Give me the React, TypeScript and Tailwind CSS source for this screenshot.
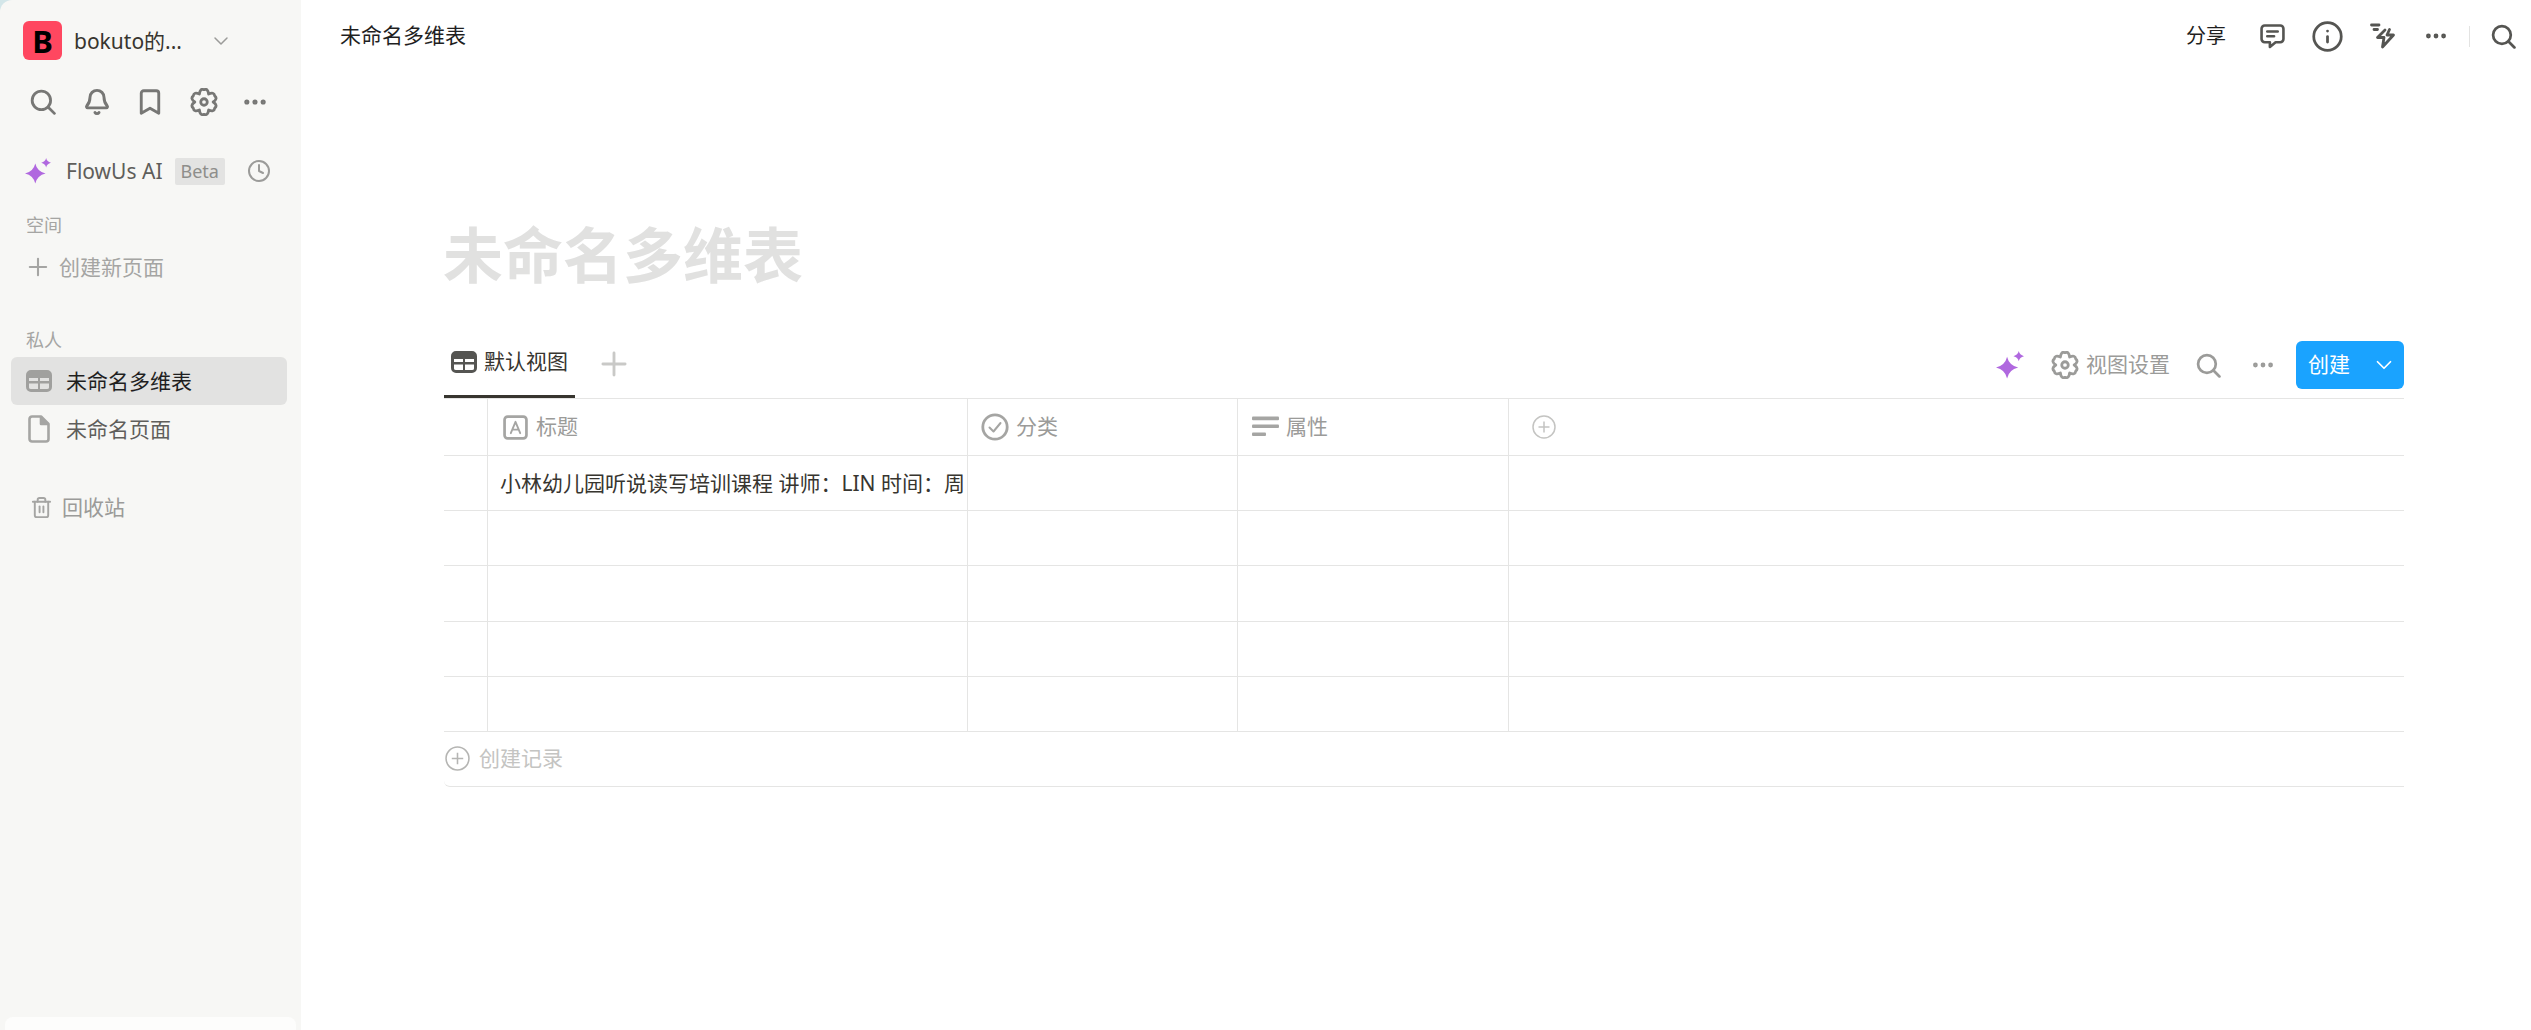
import React from 'react';
import { Bell, Bookmark, ChevronDown, Clock, Ellipsis, Info, Plus, Trash2 } from 'lucide-react';

const flowerPath = (() => {
  const pt = (deg: number, r: number) => {
    const a = (deg * Math.PI) / 180;
    return `${(12 + r * Math.sin(a)).toFixed(2)} ${(12 - r * Math.cos(a)).toFixed(2)}`;
  };
  let d = `M${pt(-30, 7.9)}`;
  for (let i = 0; i < 6; i++) {
    const a = i * 60;
    d += ` Q${pt(a - 16, 12.4)} ${pt(a, 10.6)} Q${pt(a + 16, 12.4)} ${pt(a + 30, 7.9)}`;
  }
  return d + 'Z';
})();

const Gear: React.FC<{ className?: string }> = ({ className }) => (
  <svg viewBox="0 0 24 24" fill="none" stroke="currentColor" strokeWidth="2.4" strokeLinejoin="round" className={className}>
    <path d={flowerPath} />
    <circle cx="12" cy="12" r="2.800" />
  </svg>
);

const SearchIcon: React.FC<{ className?: string }> = ({ className }) => (
  <svg viewBox="0 0 24 24" fill="none" stroke="currentColor" strokeWidth="2.600" strokeLinecap="round" className={className}>
    <circle cx="10.500" cy="10.500" r="8.500" />
    <path d="M16.800 16.800L22.500 22.500" />
  </svg>
);

const Sparkle: React.FC<{ className?: string }> = ({ className }) => (
  <svg viewBox="0 0 24 24" fill="#b068df" className={className}>
    <path d="M9.500 5Q11.200 12.400 19 14.200Q11.200 16 9.500 23.500Q7.800 16 0 14.200Q7.800 12.400 9.500 5Z" />
    <path d="M19.500 0Q20.200 3.400 24 4.400Q20.200 5.400 19.500 8.800Q18.800 5.400 15 4.400Q18.800 3.400 19.500 0Z" />
  </svg>
);

const TableIcon: React.FC<{ className?: string }> = ({ className }) => (
  <svg viewBox="0 0 26 22" fill="currentColor" className={className}>
    <path
      fillRule="evenodd"
      d="M5 0H21A5 5 0 0 1 26 5V17A5 5 0 0 1 21 22H5A5 5 0 0 1 0 17V5A5 5 0 0 1 5 0ZM3 8V11H12V8ZM14 8V11H23V8ZM3 13.500V17.500Q3 19 5 19H12V13.500ZM14 13.500V19H21Q23 19 23 17.500V13.500Z"
    />
  </svg>
);

const PageIcon: React.FC<{ className?: string }> = ({ className }) => (
  <svg viewBox="0 0 22 28" fill="none" stroke="currentColor" strokeWidth="2.600" strokeLinejoin="round" className={className}>
    <path d="M4 1.500H13L20.500 9V24A2.500 2.500 0 0 1 18 26.500H4A2.500 2.500 0 0 1 1.500 24V4A2.500 2.500 0 0 1 4 1.500Z" />
    <path d="M13 1.500V9H20.500" fill="currentColor" />
  </svg>
);

const CommentIcon: React.FC<{ className?: string }> = ({ className }) => (
  <svg viewBox="0 0 24 24" fill="none" stroke="currentColor" strokeWidth="2.500" strokeLinecap="round" strokeLinejoin="round" className={className}>
    <path d="M4.500 1.500H19.500A3 3 0 0 1 22.500 4.500V14.500A3 3 0 0 1 19.500 17.500H15L9.500 22V17.500H4.500A3 3 0 0 1 1.500 14.500V4.500A3 3 0 0 1 4.500 1.500Z" />
    <path d="M7 7.200H17M7 11.800H13.500" />
  </svg>
);

const BoltIcon: React.FC<{ className?: string }> = ({ className }) => (
  <svg viewBox="0 0 26 26" fill="none" stroke="currentColor" strokeWidth="2.800" strokeLinecap="round" strokeLinejoin="round" className={className}>
    <path d="M1.500 2H9M4 6.500H7.500" />
    <path d="M15 7L7.500 14.500H14L12.500 24L23.500 12H17L19.500 6.500" />
  </svg>
);

const LetterIcon: React.FC<{ className?: string }> = ({ className }) => (
  <svg viewBox="0 0 24 24" fill="none" stroke="currentColor" strokeLinecap="round" strokeLinejoin="round" className={className}>
    <rect x="1.500" y="1.500" width="21" height="21" rx="3" strokeWidth="2.600" />
    <path d="M7.500 17.500L12 6.500L16.500 17.500M9 14H15" strokeWidth="1.800" />
  </svg>
);

const CheckCircle: React.FC<{ className?: string }> = ({ className }) => (
  <svg viewBox="0 0 28 28" fill="none" stroke="currentColor" strokeLinecap="round" strokeLinejoin="round" className={className}>
    <circle cx="14" cy="14" r="12.200" strokeWidth="2.800" />
    <path d="M8.500 14.500L12.500 18.500L19.500 10" strokeWidth="2" />
  </svg>
);

const TextIcon: React.FC<{ className?: string }> = ({ className }) => (
  <svg viewBox="0 0 27 24" fill="currentColor" className={className}>
    <rect x="0" y="1.500" width="27" height="3.800" rx="1" />
    <rect x="0" y="9.500" width="27" height="3.400" rx="1" />
    <rect x="0" y="17.500" width="14" height="3.400" rx="1" />
  </svg>
);

const PlusCircle: React.FC<{ className?: string }> = ({ className }) => (
  <svg viewBox="0 0 24 24" fill="none" stroke="currentColor" strokeWidth="1.500" className={className}>
    <circle cx="12" cy="12" r="11" />
    <path d="M12 6.500V17.500M6.500 12H17.500" />
  </svg>
);

const Sidebar: React.FC = () => {
  return (
    <div className="w-[301px] h-[1030px] shrink-0 bg-[#d3e6e9]">
      <aside className="flex flex-col h-full bg-[#f7f7f5] rounded-tl-[12px] overflow-hidden text-[21px] leading-[30px]">
        <div className="flex items-center mt-[21px] ml-[23px] h-[39px]">
          <div className="flex items-center justify-center w-[39px] h-[39px] rounded-[6px] bg-[#ff4760] text-[31px] font-bold text-black">
            B
          </div>
          <span className="ml-[12px] text-[#37352f]">bokuto的...</span>
          <ChevronDown className="ml-[27px] w-[24px] h-[24px] text-[#9b9b99]" strokeWidth={1.5} />
        </div>

        <div className="flex items-center gap-[25px] mt-[27px] ml-[30px] h-[30px] text-[#777775]">
          <SearchIcon className="w-[26px] h-[26px] mr-[2px]" />
          <Bell className="w-[28px] h-[28px]" strokeWidth={2.5} />
          <Bookmark className="w-[30px] h-[30px] -ml-[1px]" strokeWidth={2.3} />
          <Gear className="w-[28px] h-[28px]" />
          <Ellipsis className="w-[28px] h-[28px] -ml-[2px]" strokeWidth={2.4} />
        </div>

        <div className="flex items-center mt-[34px] ml-[25px] h-[40px]">
          <Sparkle className="w-[26px] h-[26px]" />
          <span className="ml-[15px] text-[#5f5e5b]">FlowUs AI</span>
          <span className="ml-[12px] px-[6px] h-[27px] rounded-[2px] bg-[#e3e3e2] text-[18px] leading-[27px] text-[#8e8e8b]">
            Beta
          </span>
          <Clock className="ml-[22px] w-[24px] h-[24px] text-[#9b9b99]" strokeWidth={2} />
        </div>

        <div className="mt-[22px] ml-[26px] h-[24px] text-[18px] leading-[24px] text-[#a5a5a3]">空间</div>
        <div className="flex items-center mt-[10px] ml-[24px] h-[40px] text-[#a5a5a3]">
          <Plus className="w-[28px] h-[28px]" strokeWidth={1.8} />
          <span className="ml-[7px]">创建新页面</span>
        </div>

        <div className="mt-[41px] ml-[26px] h-[24px] text-[18px] leading-[24px] text-[#a5a5a3]">私人</div>
        <div className="flex items-center mt-[5px] ml-[11px] mr-[14px] pl-[15px] h-[48px] rounded-[6px] bg-[#e2e2e1] text-[#1f1f1f]">
          <TableIcon className="w-[26px] h-[22px] text-[#a0a09e]" />
          <span className="ml-[14px]">未命名多维表</span>
        </div>
        <div className="flex items-center ml-[28px] h-[48px] text-[#5f5e5b]">
          <PageIcon className="w-[22px] h-[28px] text-[#a5a5a3]" />
          <span className="ml-[16px]">未命名页面</span>
        </div>

        <div className="flex items-center mt-[34px] ml-[30px] h-[40px] text-[#9b9b99]">
          <Trash2 className="w-[23px] h-[23px] text-[#a5a5a3]" strokeWidth={2} />
          <span className="ml-[9px]">回收站</span>
        </div>

        <div className="mt-auto mx-[5px] h-[13px] rounded-t-[8px] bg-[#fdfdfc]" />
      </aside>
    </div>
  );
};

const TopBar: React.FC = () => {
  return (
    <header className="flex items-center justify-between h-[72px] pl-[39px] pr-[15px] text-[21px] text-[#1f1f1f]">
      <span>未命名多维表</span>
      <div className="flex items-center text-[#555552]">
        <span className="text-[20px] text-[#1f1f1f]">分享</span>
        <CommentIcon className="ml-[34px] w-[25px] h-[25px]" />
        <Info className="ml-[26px] w-[33px] h-[33px]" strokeWidth={2} />
        <BoltIcon className="ml-[26px] w-[26px] h-[26px]" />
        <Ellipsis className="ml-[27px] w-[26px] h-[26px]" strokeWidth={2.4} />
        <div className="ml-[20px] w-px h-[21px] bg-[#e3e3e2]" />
        <SearchIcon className="ml-[21px] w-[25px] h-[25px]" />
      </div>
    </header>
  );
};

const ViewBar: React.FC = () => {
  return (
    <div className="flex items-start justify-between h-[64px] mt-[40px] text-[21px]">
      <div className="flex items-start">
        <div className="flex items-center w-[131px] h-[64px] pl-[7px] pb-[5px] border-b-[3px] border-[#37352f] text-[#37352f]">
          <TableIcon className="w-[26px] h-[22px] text-[#555552]" />
          <span className="ml-[7px]">默认视图</span>
        </div>
        <Plus className="ml-[20px] mt-[11px] w-[38px] h-[38px] text-[#c9c9c7]" strokeWidth={1.8} />
      </div>

      <div className="flex items-center h-[48px] mt-[7px] text-[#9b9b99]">
        <Sparkle className="w-[28px] h-[28px]" />
        <Gear className="ml-[27px] w-[28px] h-[28px]" />
        <span className="ml-[7px]">视图设置</span>
        <SearchIcon className="ml-[26px] w-[25px] h-[25px]" />
        <Ellipsis className="ml-[29px] w-[26px] h-[26px]" strokeWidth={2.4} />
        <div className="flex items-center ml-[20px] w-[108px] h-[48px] pl-[12px] rounded-[6px] bg-[#1aa3ff] text-white">
          <span>创建</span>
          <ChevronDown className="ml-[21px] w-[26px] h-[26px]" strokeWidth={1.6} />
        </div>
      </div>
    </div>
  );
};

const Cell: React.FC<{ children?: React.ReactNode; last?: boolean }> = ({ children, last }) => (
  <div className={last ? 'flex items-center min-w-0' : 'flex items-center min-w-0 border-r border-[#e5e5e4]'}>{children}</div>
);

const DataTable: React.FC = () => {
  const rows = [
    '小林幼儿园听说读写培训课程 讲师：LIN 时间：周',
    '',
    '',
    '',
    '',
  ];
  return (
    <div className="text-[21px] border-t border-[#e5e5e4]">
      <div className="grid grid-cols-[44px_480px_270px_271px_1fr] h-[57px] border-b border-[#e5e5e4] text-[#9b9b99]">
        <Cell />
        <Cell>
          <LetterIcon className="ml-[15px] w-[25px] h-[25px] text-[#a5a5a3]" />
          <span className="ml-[8px]">标题</span>
        </Cell>
        <Cell>
          <CheckCircle className="ml-[13px] w-[28px] h-[28px] text-[#a5a5a3]" />
          <span className="ml-[7px]">分类</span>
        </Cell>
        <Cell>
          <TextIcon className="ml-[14px] w-[27px] h-[24px] text-[#a5a5a3]" />
          <span className="ml-[7px]">属性</span>
        </Cell>
        <Cell last>
          <PlusCircle className="ml-[23px] w-[24px] h-[24px] text-[#c4c4c2]" />
        </Cell>
      </div>

      {rows.map((text, i) => (
        <div key={i} className="grid grid-cols-[44px_480px_270px_271px_1fr] h-[55.2px] border-b border-[#e5e5e4] text-[#37352f]">
          <Cell />
          <Cell>
            <span className="ml-[12px] pt-[2px] whitespace-nowrap overflow-hidden">{text}</span>
          </Cell>
          <Cell />
          <Cell />
          <Cell last />
        </div>
      ))}

      <div className="flex items-center h-[55px] border-b border-[#e5e5e4] rounded-bl-[6px] text-[#c4c4c2]">
        <PlusCircle className="ml-[1px] w-[25px] h-[25px] text-[#b5b5b3]" />
        <span className="ml-[9px]">创建记录</span>
      </div>
    </div>
  );
};

const App: React.FC = () => {
  return (
    <div className="flex h-[1030px] overflow-hidden bg-white font-['Noto_Sans','Noto_Sans_CJK_SC',sans-serif]">
      <Sidebar />
      <main className="flex-1 min-w-0">
        <TopBar />
        <section className="mt-[147px] pl-[143px] pr-[127px]">
          <h1 className="h-[72px] -ml-[1px] text-[60px] leading-[72px] font-bold text-[#e1e1e0]">未命名多维表</h1>
          <div className="h-[3px]" />
          <ViewBar />
          <DataTable />
        </section>
      </main>
    </div>
  );
};

export default App;
